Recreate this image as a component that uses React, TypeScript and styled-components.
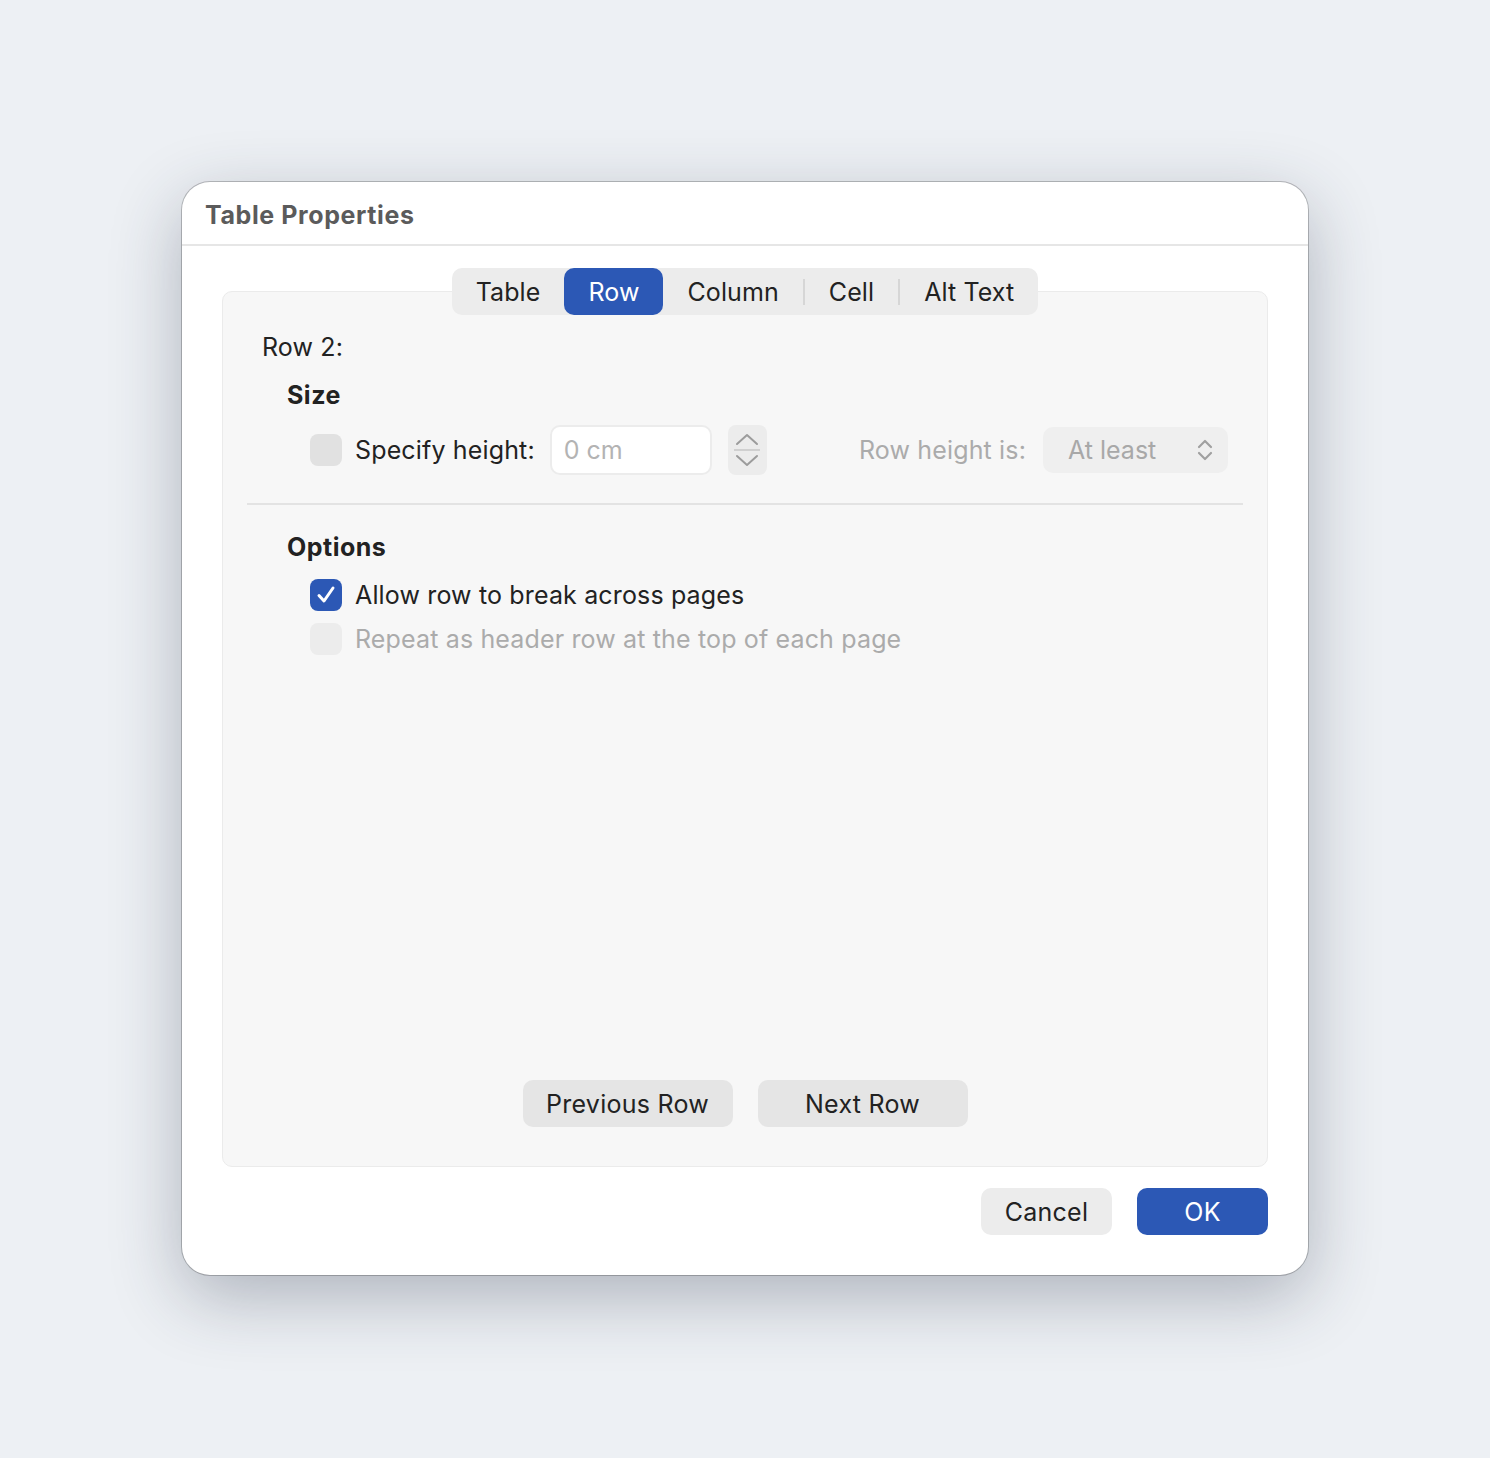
import React from "react";
import styled, { createGlobalStyle, css } from "styled-components";

const GlobalStyle = createGlobalStyle`
  html, body {
    margin: 0;
    padding: 0;
    background: #edf0f4;
    font-family: Inter, "Noto Sans", "Liberation Sans", sans-serif;
  }
`;

const Page = styled.div`
  width: 1490px;
  height: 1458px;
  padding: 182px 0 0 182px;
  box-sizing: border-box;
`;

const Window = styled.div`
  width: 1126px;
  height: 1093px;
  box-sizing: border-box;
  background: #ffffff;
  border-radius: 28px;
  box-shadow: 0 0 0 1px rgba(0, 0, 0, 0.22), 0 22px 70px rgba(40, 50, 70, 0.32);
  display: flex;
  flex-direction: column;
  overflow: hidden;
`;

const TitleBar = styled.div`
  height: 64px;
  flex: none;
  box-sizing: border-box;
  padding: 3px 23px 0;
  display: flex;
  align-items: center;
  border-bottom: 2px solid #e6e6e6;
  font-size: 25px;
  font-weight: 700;
  color: #5b5b5b;
  letter-spacing: 0.6px;
`;

const Body = styled.div`
  flex: 1;
  display: flex;
  flex-direction: column;
  padding: 22px 40px 40px 40px;
`;

const TabBar = styled.div`
  position: relative;
  z-index: 1;
  align-self: center;
  display: flex;
  align-items: center;
  height: 47px;
  background: #ececec;
  border-radius: 10px;
`;

const Tab = styled.div<{ $active?: boolean }>`
  height: 47px;
  padding: 0 24px;
  display: flex;
  align-items: center;
  border-radius: 10px;
  font-size: 25px;
  letter-spacing: 0.1px;
  color: #222;
  ${(p) =>
    p.$active &&
    css`
      background: #2c58b5;
      color: #fff;
    `}
`;

const TabSep = styled.div`
  width: 2px;
  height: 26px;
  background: #d6d6d6;
`;

const Panel = styled.div`
  flex: 1;
  margin-top: -24px;
  background: #f7f7f7;
  border: 1px solid #ebebeb;
  border-radius: 10px;
  display: flex;
  flex-direction: column;
  padding: 40px 24px 39px 24px;
`;

const RowLabel = styled.div`
  line-height: 30px;
  font-size: 25px;
  letter-spacing: 0.15px;
  color: #222;
  padding-left: 15px;
`;

const SectionTitle = styled.div<{ $top: number }>`
  margin-top: ${(p) => p.$top}px;
  padding-left: 40px;
  line-height: 30px;
  font-size: 25px;
  font-weight: 700;
  letter-spacing: 0.5px;
  color: #222;
`;

const SizeRow = styled.div`
  margin-top: 14px;
  height: 52px;
  display: flex;
  align-items: center;
  padding-left: 63px;
  padding-right: 15px;
`;

const Check = styled.div<{ $checked?: boolean; $faint?: boolean }>`
  width: 32px;
  height: 32px;
  flex: none;
  box-sizing: border-box;
  border-radius: 8px;
  background: ${(p) => (p.$checked ? "#2c58b5" : p.$faint ? "#ececec" : "#e1e1e1")};
  display: flex;
  align-items: center;
  justify-content: center;
`;

const Label = styled.span<{ $muted?: boolean }>`
  font-size: 25px;
  letter-spacing: 0.15px;
  color: ${(p) => (p.$muted ? "#ababab" : "#222")};
  margin-left: 13px;
  white-space: nowrap;
`;

const Input = styled.div`
  margin-left: 15px;
  width: 162px;
  height: 50px;
  box-sizing: border-box;
  border: 2px solid #ececec;
  border-radius: 10px;
  background: #fff;
  display: flex;
  align-items: center;
  padding-left: 12px;
  font-size: 25px;
  color: #b3b3b3;
`;

const Stepper = styled.div`
  margin-left: 16px;
  width: 39px;
  height: 50px;
  border-radius: 8px;
  background: #ececec;
  display: flex;
  flex-direction: column;
  align-items: center;
  justify-content: center;
`;

const StepLine = styled.div`
  width: 26px;
  height: 2px;
  background: #d0d0d0;
  margin: 3px 0;
`;

const Spacer = styled.div`
  flex: 1;
`;

const Select = styled.div`
  margin-left: 17px;
  width: 185px;
  height: 46px;
  box-sizing: border-box;
  border-radius: 10px;
  background: #efefef;
  display: flex;
  align-items: center;
  justify-content: space-between;
  padding: 0 14px 0 25px;
  font-size: 25px;
  color: #a8a8a8;
`;

const Divider = styled.div`
  margin-top: 27px;
  height: 2px;
  background: #e3e3e3;
`;

const OptionList = styled.div`
  margin-top: 17px;
  display: flex;
  flex-direction: column;
  gap: 12px;
  padding-left: 63px;
`;

const OptionRow = styled.div`
  display: flex;
  align-items: center;
  height: 32px;
`;

const NavRow = styled.div`
  display: flex;
  justify-content: center;
  gap: 25px;
`;

const Button = styled.div<{ $primary?: boolean; $width: number; $soft?: boolean }>`
  width: ${(p) => p.$width}px;
  height: 47px;
  border-radius: 10px;
  display: flex;
  align-items: center;
  justify-content: center;
  font-size: 25px;
  letter-spacing: 0.25px;
  background: ${(p) => (p.$primary ? "#2c58b5" : p.$soft ? "#ececec" : "#e5e5e5")};
  color: ${(p) => (p.$primary ? "#fff" : "#222")};
`;

const Footer = styled.div`
  margin-top: 21px;
  display: flex;
  justify-content: flex-end;
  gap: 25px;
`;

const Chevron = ({ up }: { up?: boolean }) => (
  <svg width="24" height="13" viewBox="0 0 24 13">
    <path
      d={up ? "M2 11 L12 2 L22 11" : "M2 2 L12 11 L22 2"}
      fill="none"
      stroke="#9c9c9c"
      strokeWidth="2"
      strokeLinecap="round"
      strokeLinejoin="round"
    />
  </svg>
);

const UpDown = () => (
  <svg width="18" height="24" viewBox="0 0 18 24">
    <path
      d="M3 9 L9 3 L15 9 M3 15 L9 21 L15 15"
      fill="none"
      stroke="#a0a0a0"
      strokeWidth="2.2"
      strokeLinecap="round"
      strokeLinejoin="round"
    />
  </svg>
);

const CheckMark = () => (
  <svg width="22" height="22" viewBox="0 0 22 22">
    <path
      d="M4 11.5 L9 17 L18 4"
      fill="none"
      stroke="#fff"
      strokeWidth="3"
      strokeLinecap="round"
      strokeLinejoin="round"
    />
  </svg>
);

const App: React.FC = () => {
  return (
    <Page>
      <GlobalStyle />
      <Window>
        <TitleBar>Table Properties</TitleBar>
        <Body>
          <TabBar>
            <Tab>Table</Tab>
            <Tab $active>Row</Tab>
            <Tab>Column</Tab>
            <TabSep />
            <Tab>Cell</Tab>
            <TabSep />
            <Tab>Alt Text</Tab>
          </TabBar>
          <Panel>
            <RowLabel>Row 2:</RowLabel>
            <SectionTitle $top={18}>Size</SectionTitle>
            <SizeRow>
              <Check />
              <Label>Specify height:</Label>
              <Input>0 cm</Input>
              <Stepper>
                <Chevron up />
                <StepLine />
                <Chevron />
              </Stepper>
              <Spacer />
              <Label $muted>Row height is:</Label>
              <Select>
                <span>At least</span>
                <UpDown />
              </Select>
            </SizeRow>
            <Divider />
            <SectionTitle $top={27}>Options</SectionTitle>
            <OptionList>
              <OptionRow>
                <Check $checked>
                  <CheckMark />
                </Check>
                <Label>Allow row to break across pages</Label>
              </OptionRow>
              <OptionRow>
                <Check $faint />
                <Label $muted>Repeat as header row at the top of each page</Label>
              </OptionRow>
            </OptionList>
            <Spacer />
            <NavRow>
              <Button $width={210}>Previous Row</Button>
              <Button $width={210}>Next Row</Button>
            </NavRow>
          </Panel>
          <Footer>
            <Button $width={131} $soft>
              Cancel
            </Button>
            <Button $width={131} $primary>
              OK
            </Button>
          </Footer>
        </Body>
      </Window>
    </Page>
  );
};

export default App;
